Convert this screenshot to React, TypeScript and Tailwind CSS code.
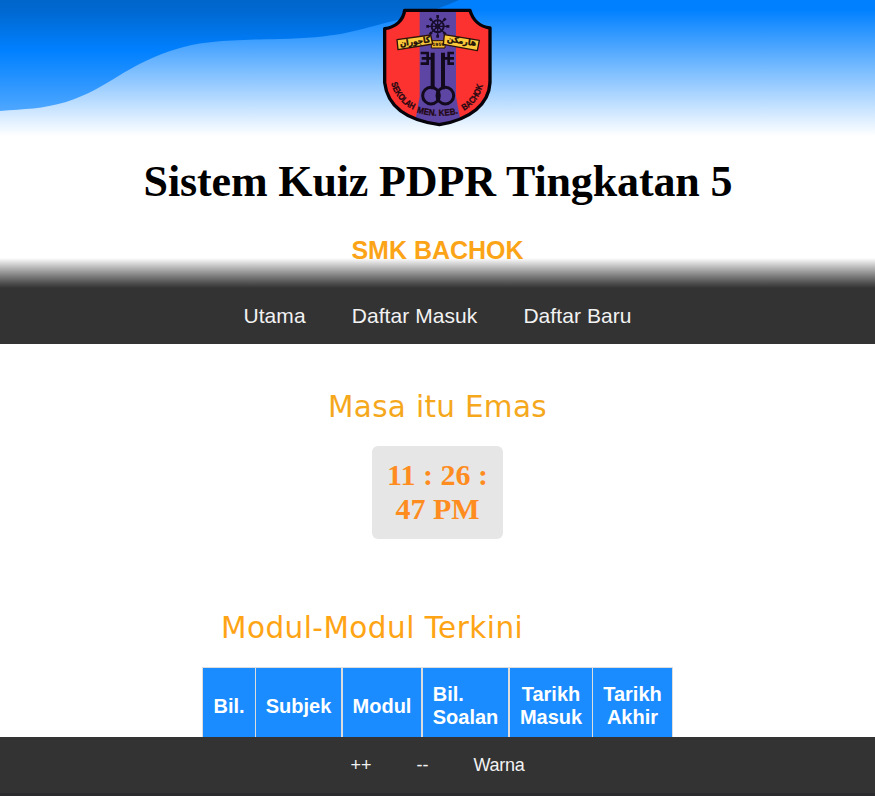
import type { ReactNode } from "react";

const ARIAL = "font-['Liberation_Sans',sans-serif]";
const SERIF = "font-['Liberation_Serif',serif]";
const VERDANA = "font-['DejaVu_Sans',sans-serif]";

const SHIELD =
  "M104 31H300C308 60 330 80 360 84V248C357 312 302 358 208 374C105 360 52 316 44 248V86C76 82 100 62 104 31Z";

function Crest() {
  return (
    <svg viewBox="0 0 405 405" className="block h-[135px] w-[135px]">
      <defs>
        <clipPath id="shield">
          <path d={SHIELD} />
        </clipPath>
        <path id="motto-left" d="M63 250C75 288 97 316 134 331" />
        <path id="motto-mid" d="M140 337C180 351 230 351 274 338" />
        <path id="motto-right" d="M282 332C313 315 331 289 340 250" />
      </defs>
      <g clipPath="url(#shield)">
        <rect width="405" height="405" fill="#fb3230" />
        <path d="M149 0H258V290L280 405H128L149 290Z" fill="#5d45a3" />
      </g>
      <path d={SHIELD} fill="none" stroke="#06030a" strokeWidth="10" strokeLinejoin="round" />
      <g stroke="#170d2c" fill="none">
        <circle cx="203" cy="79" r="18" strokeWidth="6" />
        <circle cx="203" cy="79" r="6" strokeWidth="4" />
        <path d="M203 50V108M174 79H232M183 59L223 99M223 59L183 99" strokeWidth="4" />
        <path d="M203 45V54M203 104V113M169 79H177M229 79H238M179 55L185 61M221 97L227 103M227 55L221 61M185 97L179 103" strokeWidth="8" />
      </g>
      <path d="M184 122H225V144H184Z" fill="#f3b92f" stroke="#2d1308" strokeWidth="3" />
      <path d="M81 119L182 105L188 132L84 149Z M223 104L328 121L322 152L220 133Z" fill="#fccb3c" stroke="#2d1308" strokeWidth="4" strokeLinejoin="round" />
      <g fill="#1e0f08" stroke="#1e0f08" strokeWidth="1" textAnchor="middle" className="font-['DejaVu_Sans',sans-serif] font-bold">
        <text x="136" y="133" fontSize="25" textLength="92" lengthAdjust="spacingAndGlyphs" transform="rotate(-8 136 133)">كاجوران</text>
        <text x="274" y="131" fontSize="25" textLength="88" lengthAdjust="spacingAndGlyphs" transform="rotate(9 274 131)">هارمكن</text>
        <text x="205" y="139" fontSize="13" strokeWidth="0">1959</text>
      </g>
      <g stroke="#120a1c" fill="none">
        <circle cx="183" cy="287" r="25" strokeWidth="9" />
        <circle cx="226" cy="287" r="25" strokeWidth="9" />
        <path d="M188 268V158M219 268V158" strokeWidth="12" />
        <path d="M184 175H155M224 175H252M173 155V195M236 155V195M152 159H175M152 191H175M234 159H252M234 191H252" strokeWidth="8" />
      </g>
      <g fill="#220711" stroke="#220711" strokeWidth="0.8" fontSize="27" className="font-['Liberation_Sans',sans-serif] font-bold">
        <text>
          <textPath href="#motto-left" textLength="107" lengthAdjust="spacingAndGlyphs">SEKOLAH</textPath>
        </text>
        <text>
          <textPath href="#motto-mid" textLength="126" lengthAdjust="spacingAndGlyphs">MEN. KEB.</textPath>
        </text>
        <text>
          <textPath href="#motto-right" textLength="98" lengthAdjust="spacingAndGlyphs">BACHOK</textPath>
        </text>
      </g>
    </svg>
  );
}

function HeaderWave() {
  return (
    <svg viewBox="0 0 875 136" preserveAspectRatio="none" className="absolute inset-x-0 top-0 h-[136px] w-full">
      <defs>
        <linearGradient id="sky" x1="0" y1="0" x2="0" y2="136" gradientUnits="userSpaceOnUse">
          <stop offset="0" stopColor="#0080ff" />
          <stop offset="0.07" stopColor="#0080ff" />
          <stop offset="1" stopColor="#ffffff" />
        </linearGradient>
        <linearGradient id="wave" x1="0" y1="0" x2="0" y2="112" gradientUnits="userSpaceOnUse">
          <stop offset="0" stopColor="#0066cc" />
          <stop offset="0.09" stopColor="#0068d0" />
          <stop offset="0.45" stopColor="#0080ff" />
          <stop offset="1" stopColor="#50a8ff" />
        </linearGradient>
      </defs>
      <rect width="875" height="136" fill="url(#sky)" />
      <path d="M0 0H459C438 10 410 17 385 23C355 31 335 38 280 39C230 40 205 41 180 48C125 64 110 88 66 102C42 109 25 109 0 111Z" fill="url(#wave)" />
    </svg>
  );
}

function Th({ className, children }: { className: string; children: ReactNode }) {
  return (
    <th className={`h-[76px] border-[#dddddd] bg-[#1a8cff] p-0 text-center align-middle ${className}`}>
      <span className="inline-block text-left">{children}</span>
    </th>
  );
}

export default function App() {
  return (
    <div className={`flex h-[796px] w-[875px] flex-col overflow-hidden bg-white ${ARIAL}`}>
      <header className="relative flex h-[288px] flex-col items-center bg-linear-to-b from-white from-[258px] to-[#333333]">
        <HeaderWave />
        <div className="relative"><Crest /></div>
        <h1 className={`relative mt-[21px] pl-px text-[44px] leading-[51px] font-bold tracking-[-0.13px] text-black ${SERIF}`}>Sistem Kuiz PDPR Tingkatan 5</h1>
        <h2 className="relative mt-[29px] text-[25px] leading-[28px] font-bold text-[#fba418]">SMK BACHOK</h2>
      </header>
      <nav className="flex h-[56px] shrink-0 items-center justify-center gap-[46px] bg-[#333333] text-[21px] leading-6 tracking-[0.07px] text-[#f2f2f2]">
        <a>Utama</a>
        <a>Daftar Masuk</a>
        <a>Daftar Baru</a>
      </nav>
      <main className="flex h-[393px] flex-col items-center overflow-hidden">
        <h3 className={`mt-[45px] text-[29.5px] leading-[36px] tracking-[0.3px] text-[#f5a81c] ${VERDANA}`}>Masa itu Emas</h3>
        <div className={`mt-[21px] h-[93px] w-[131px] shrink-0 rounded-[6px] bg-[#e6e6e6] px-[10px] pt-[12px] text-center text-[30px] leading-[34px] font-bold text-[#ff8c1f] ${SERIF}`}>
          11 : 26 : 47 PM
        </div>
        <section className="mt-[71px] w-[471px]">
          <h3 className={`pl-[19px] text-[29.5px] leading-[36px] tracking-[0.45px] text-[#ffa414] ${VERDANA}`}>Modul-Modul Terkini</h3>
          <table className="mt-[21px] w-[471px] table-fixed border-separate border-spacing-0 border-t border-l border-[#dddddd] text-[20px] leading-[23px] font-bold text-white">
            <thead>
              <tr>
                <Th className="w-[53px] border-r">Bil.</Th>
                <Th className="w-[87px] border-r-2">Subjek</Th>
                <Th className="w-[80px] border-r-2">Modul</Th>
                <Th className="w-[87px] border-r-2">Bil.<br />Soalan</Th>
                <Th className="w-[83px] border-r"><span className="block text-center">Tarikh<br />Masuk</span></Th>
                <Th className="w-[80px] border-r"><span className="block text-center">Tarikh<br />Akhir</span></Th>
              </tr>
            </thead>
          </table>
        </section>
      </main>
      <footer className="flex h-[59px] shrink-0 items-center justify-center gap-[45px] border-b-[3px] border-[#2b2b2d] bg-[#333333] text-[18px] text-[#f2f2f2]">
        <a>++</a>
        <a>--</a>
        <a className="tracking-[-0.3px]">Warna</a>
      </footer>
    </div>
  );
}
